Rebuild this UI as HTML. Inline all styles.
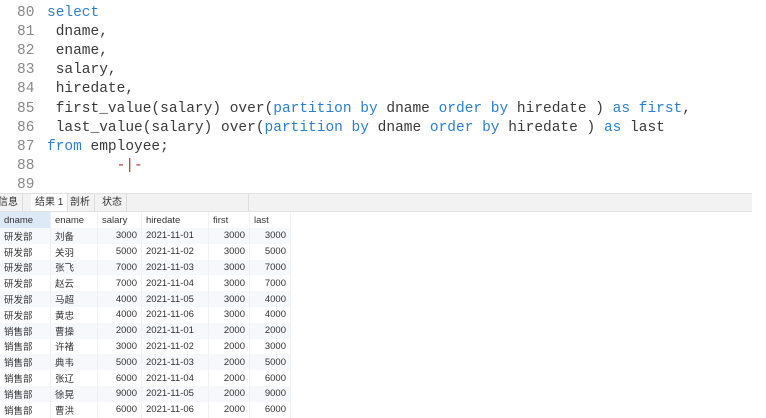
<!DOCTYPE html>
<html><head><meta charset="utf-8"><style>
body{margin:0;width:766px;height:416px;background:#fff;overflow:hidden;position:relative;font-family:"Liberation Sans","Noto Sans CJK SC",sans-serif}
.code{position:absolute;left:0;top:0;font-family:"Liberation Mono",monospace;font-size:14.5px;color:#3a3a3a}
.ln{position:absolute;left:17px;color:#888}
.tx{position:absolute;left:47px;white-space:pre}
.k{color:#2b7fd0}
.tabs{position:absolute;left:0;top:193px;width:752px;height:17px;background:#f2f2f2;border-top:1px solid #e2e2e2;border-bottom:1px solid #e2e2e2;font-size:10px;color:#333}
.tab{position:absolute;top:0;height:17px;line-height:17px;padding:0 4px;border-right:1px solid #ddd;white-space:nowrap}
table{position:absolute;left:0;top:212px;border-collapse:collapse;font-size:9.5px;color:#333}
td{height:15.8px;padding:0 4px;white-space:nowrap;border-right:1px solid #eef0f3}
tr.h td{height:16px;color:#333}
tr:nth-child(even) td{background:#f6f8fb}
.r{text-align:right}
</style></head><body>
<div class="code">
<div class="ln" style="top:5px">80</div><div class="tx k" style="top:5px">select</div>
<div class="ln" style="top:24px">81</div><div class="tx" style="top:24px"> dname,</div>
<div class="ln" style="top:43px">82</div><div class="tx" style="top:43px"> ename,</div>
<div class="ln" style="top:62px">83</div><div class="tx" style="top:62px"> salary,</div>
<div class="ln" style="top:81px">84</div><div class="tx" style="top:81px"> hiredate,</div>
<div class="ln" style="top:101px">85</div><div class="tx" style="top:101px"> first_value(salary) over(<span class="k">partition by</span> dname <span class="k">order by</span> hiredate ) <span class="k">as first</span>,</div>
<div class="ln" style="top:120px">86</div><div class="tx" style="top:120px"> last_value(salary) over(<span class="k">partition by</span> dname <span class="k">order by</span> hiredate ) <span class="k">as</span> last</div>
<div class="ln" style="top:139px">87</div><div class="tx" style="top:139px"><span class="k">from</span> employee;</div>
<div class="ln" style="top:158px">88</div><div class="tx" style="top:158px;color:#a33">        -|-</div>
<div class="ln" style="top:177px">89</div>
</div>
<div class="tabs">
<div class="tab" style="left:-6px">信息</div>
<div class="tab" style="left:31px;background:#fff">结果 1</div>
<div class="tab" style="left:66px">剖析</div>
<div class="tab" style="left:98px">状态</div>
<div class="tab" style="left:130px;width:110px"></div>
</div>
<table>
<tr class="h"><td style="width:42px;background:#dde9f6">dname</td><td style="width:38px">ename</td><td style="width:35px">salary</td><td style="width:58px">hiredate</td><td style="width:32px">first</td><td style="width:32px">last</td></tr>
<tr><td>研发部</td><td>刘备</td><td class="r">3000</td><td>2021-11-01</td><td class="r">3000</td><td class="r">3000</td></tr>
<tr><td>研发部</td><td>关羽</td><td class="r">5000</td><td>2021-11-02</td><td class="r">3000</td><td class="r">5000</td></tr>
<tr><td>研发部</td><td>张飞</td><td class="r">7000</td><td>2021-11-03</td><td class="r">3000</td><td class="r">7000</td></tr>
<tr><td>研发部</td><td>赵云</td><td class="r">7000</td><td>2021-11-04</td><td class="r">3000</td><td class="r">7000</td></tr>
<tr><td>研发部</td><td>马超</td><td class="r">4000</td><td>2021-11-05</td><td class="r">3000</td><td class="r">4000</td></tr>
<tr><td>研发部</td><td>黄忠</td><td class="r">4000</td><td>2021-11-06</td><td class="r">3000</td><td class="r">4000</td></tr>
<tr><td>销售部</td><td>曹操</td><td class="r">2000</td><td>2021-11-01</td><td class="r">2000</td><td class="r">2000</td></tr>
<tr><td>销售部</td><td>许褚</td><td class="r">3000</td><td>2021-11-02</td><td class="r">2000</td><td class="r">3000</td></tr>
<tr><td>销售部</td><td>典韦</td><td class="r">5000</td><td>2021-11-03</td><td class="r">2000</td><td class="r">5000</td></tr>
<tr><td>销售部</td><td>张辽</td><td class="r">6000</td><td>2021-11-04</td><td class="r">2000</td><td class="r">6000</td></tr>
<tr><td>销售部</td><td>徐晃</td><td class="r">9000</td><td>2021-11-05</td><td class="r">2000</td><td class="r">9000</td></tr>
<tr><td>销售部</td><td>曹洪</td><td class="r">6000</td><td>2021-11-06</td><td class="r">2000</td><td class="r">6000</td></tr>
</table>
</body></html>
